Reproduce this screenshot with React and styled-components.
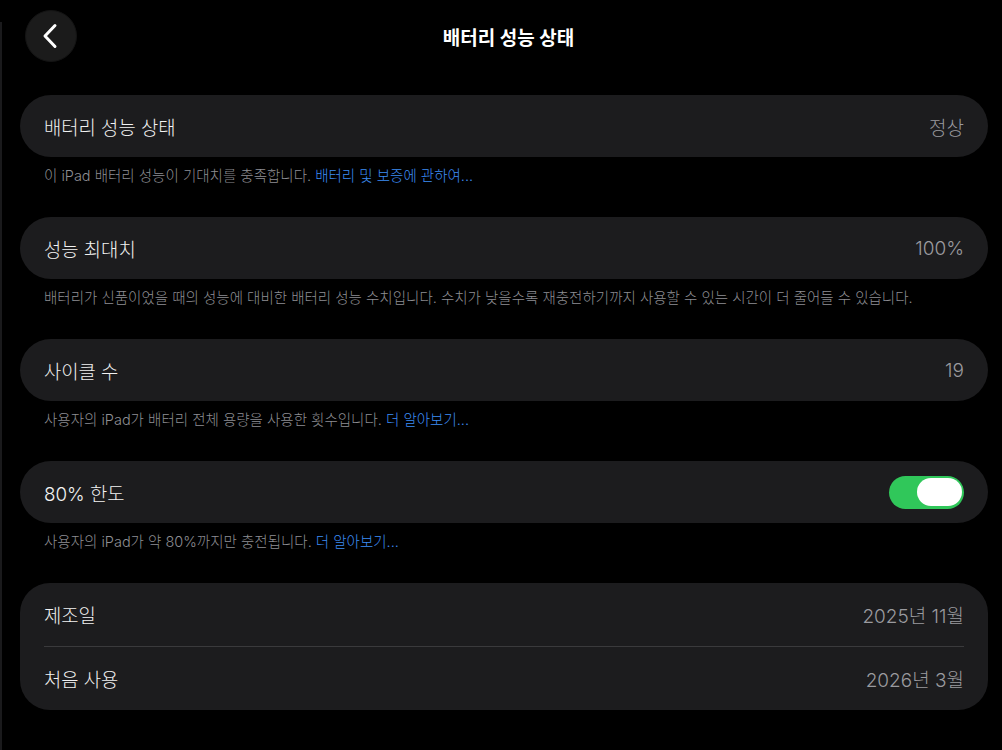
// Dependencies
// -----------------------------------------------
import React from 'react';
import styled, { createGlobalStyle } from 'styled-components';

// Styles
// -----------------------------------------------
const GlobalStyle = createGlobalStyle`
  html, body {
    margin: 0;
    padding: 0;
    background: #000;
  }
  body {
    font-family: "Inter", "Noto Sans CJK KR", sans-serif;
    -webkit-font-smoothing: antialiased;
  }
`;

const Page = styled.div`
  display: flex;
  width: 1002px;
  height: 750px;
  background: #000;
  overflow: hidden;
`;

const SplitEdge = styled.div`
  width: 2px;
  margin-top: 22px;
  background: #1a1a1c;
  flex-shrink: 0;
`;

const Content = styled.main`
  flex: 1;
  display: flex;
  flex-direction: column;
  padding: 10px 14px 0 18px;
`;

const NavBar = styled.header`
  display: grid;
  grid-template-columns: 52px 1fr 52px;
  align-items: center;
  height: 52px;
  padding-left: 5px;
  margin-bottom: 33px;
`;

const BackButton = styled.button`
  width: 52px;
  height: 52px;
  border-radius: 50%;
  border: 1px solid #141414;
  background: #1b1b1b;
  display: flex;
  align-items: center;
  justify-content: center;
  padding: 0 3px 0 0;
  cursor: pointer;
`;

const Title = styled.h1`
  margin: 0;
  text-align: center;
  font-size: 19px;
  font-weight: 700;
  color: #fff;
  padding-left: 4px;
`;

const Card = styled.section`
  background: #1c1c1e;
  border-radius: ${p => (p.$multi ? '30px' : '31px')};
  padding: 0 24px;
`;

const Row = styled.div`
  display: flex;
  align-items: center;
  justify-content: space-between;
  height: ${p => (p.$height || 62)}px;
  & + & {
    border-top: 1px solid #3a3a3c;
  }
`;

const Label = styled.span`
  font-size: 18.8px;
  font-weight: 300;
  color: #f2f2f2;
`;

const Value = styled.span`
  font-size: 19px;
  font-weight: 300;
  color: #9a9a9f;
`;

const Footnote = styled.p`
  margin: 0;
  padding: 10px 24px 32px;
  font-size: 14.5px;
  font-weight: 300;
  line-height: 18px;
  color: #8e8e93;
  white-space: nowrap;
`;

const FootLink = styled.a`
  color: #3d8df5;
  text-decoration: none;
`;

const Toggle = styled.div`
  width: 75px;
  height: 33px;
  border-radius: 17px;
  background: ${p => (p.$on ? '#30c75a' : '#39393d')};
  display: flex;
  align-items: center;
  justify-content: ${p => (p.$on ? 'flex-end' : 'flex-start')};
  padding: 0 2px;
  box-sizing: border-box;
`;

const Thumb = styled.div`
  width: 45px;
  height: 28px;
  border-radius: 14px;
  background: #fff;
`;

// Data
// -----------------------------------------------
const sections = [
  {
    label: '배터리 성능 상태',
    value: '정상',
    note: '이 iPad 배터리 성능이 기대치를 충족합니다. ',
    link: '배터리 및 보증에 관하여...'
  },
  {
    label: '성능 최대치',
    value: '100%',
    note:
      '배터리가 신품이었을 때의 성능에 대비한 배터리 성능 수치입니다. 수치가 낮을수록 재충전하기까지 사용할 수 있는 시간이 더 줄어들 수 있습니다.'
  },
  {
    label: '사이클 수',
    value: '19',
    note: '사용자의 iPad가 배터리 전체 용량을 사용한 횟수입니다. ',
    link: '더 알아보기...'
  },
  {
    label: '80% 한도',
    toggle: true,
    note: '사용자의 iPad가 약 80%까지만 충전됩니다. ',
    link: '더 알아보기...'
  }
];

// -----------------------------------------------
// COMPONENT->APP --------------------------------
// -----------------------------------------------
export default function App() {
  return (
    <Page>
      <GlobalStyle />
      <SplitEdge />
      <Content>
        <NavBar>
          <BackButton aria-label="뒤로">
            <svg width="16" height="26" viewBox="0 0 16 26" fill="none">
              <path
                d="M13 2.5 L3 13 L13 23.5"
                stroke="#fff"
                strokeWidth="3"
                strokeLinecap="round"
                strokeLinejoin="round"
              />
            </svg>
          </BackButton>
          <Title>배터리 성능 상태</Title>
          <span />
        </NavBar>

        {sections.map(s => (
          <React.Fragment key={s.label}>
            <Card>
              <Row>
                <Label>{s.label}</Label>
                {s.toggle ? (
                  <Toggle $on>
                    <Thumb />
                  </Toggle>
                ) : (
                  <Value>{s.value}</Value>
                )}
              </Row>
            </Card>
            <Footnote>
              {s.note}
              {s.link ? <FootLink href="#">{s.link}</FootLink> : null}
            </Footnote>
          </React.Fragment>
        ))}

        <Card $multi>
          <Row $height={63}>
            <Label>제조일</Label>
            <Value>2025년 11월</Value>
          </Row>
          <Row $height={63}>
            <Label>처음 사용</Label>
            <Value>2026년 3월</Value>
          </Row>
        </Card>
      </Content>
    </Page>
  );
}
